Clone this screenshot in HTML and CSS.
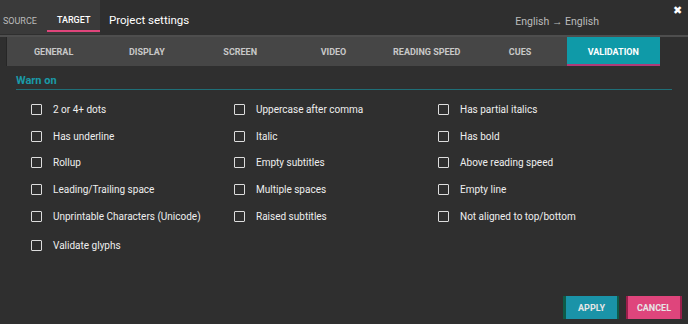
FILE: index.html
```html
<!DOCTYPE html>
<html lang="en">
<head>
    <meta charset="UTF-8">
    <meta name="viewport" content="width=device-width, initial-scale=1.0">
    <title>Project settings</title>
    <link rel="stylesheet" href="styles.css">
</head>
<body>
    <div class="header">
        <div class="side-tabs">
            <span class="side-tab">SOURCE</span>
            <span class="side-tab active">TARGET</span>
        </div>
        <h1>Project settings</h1>
        <span class="langs">English &rarr; English</span>
        <span class="close">&#x2716;</span>
    </div>

    <div class="tabs">
        <div class="tab">GENERAL</div>
        <div class="tab">DISPLAY</div>
        <div class="tab">SCREEN</div>
        <div class="tab">VIDEO</div>
        <div class="tab">READING SPEED</div>
        <div class="tab">CUES</div>
        <div class="tab active">VALIDATION</div>
    </div>

    <div class="section">
        <h2>Warn on</h2>
        <div class="options">
            <label class="option"><span class="box"></span>2 or 4+ dots</label>
            <label class="option"><span class="box"></span>Uppercase after comma</label>
            <label class="option"><span class="box"></span>Has partial italics</label>
            <label class="option"><span class="box"></span>Has underline</label>
            <label class="option"><span class="box"></span>Italic</label>
            <label class="option"><span class="box"></span>Has bold</label>
            <label class="option"><span class="box"></span>Rollup</label>
            <label class="option"><span class="box"></span>Empty subtitles</label>
            <label class="option"><span class="box"></span>Above reading speed</label>
            <label class="option"><span class="box"></span>Leading/Trailing space</label>
            <label class="option"><span class="box"></span>Multiple spaces</label>
            <label class="option"><span class="box"></span>Empty line</label>
            <label class="option"><span class="box"></span>Unprintable Characters (Unicode)</label>
            <label class="option"><span class="box"></span>Raised subtitles</label>
            <label class="option"><span class="box"></span>Not aligned to top/bottom</label>
            <label class="option last"><span class="box"></span>Validate glyphs</label>
        </div>
    </div>

    <div class="actions">
        <button class="btn btn-apply">APPLY</button>
        <button class="btn btn-cancel">CANCEL</button>
    </div>
</body>
</html>
```

FILE: styles.css
```css
body {
    margin: 0;
    width: 688px;
    height: 324px;
    overflow: hidden;
    background-color: #2f2f2f;
    font-family: Roboto, 'Liberation Sans', sans-serif;
    color: #eee;
}
.header {
    display: flex;
    align-items: center;
    height: 37px;
    box-sizing: border-box;
    padding-top: 5px;
    border-bottom: 2px solid #4e4e4e;
}
.side-tabs {
    display: flex;
    align-self: flex-start;
    margin-top: -5px;
    height: 34px;
    width: 100px;
    background-color: #3a3a3a;
}
.side-tab {
    display: flex;
    align-items: center;
    height: 32px;
    box-sizing: border-box;
    padding: 9px 0 0 3px;
    font-size: 9px;
    color: #bbb;
}
.side-tab.active {
    margin-left: 10px;
    width: 53px;
    padding-left: 10px;
    color: #fff;
    font-weight: 500;
    border-bottom: 2px solid #e0457b;
}
h1 {
    margin: 0 0 0 9px;
    font-size: 11.5px;
    font-weight: 400;
    color: #fff;
}
.langs {
    margin-left: auto;
    margin-right: 89px;
    margin-top: 2px;
    font-size: 10.5px;
    color: #bbb;
}
.close {
    position: absolute;
    top: 4px;
    right: 6px;
    font-size: 11px;
    color: #fff;
}
.tabs {
    display: flex;
    height: 29px;
    margin: 0 28px 0 7px;
    background-color: #464646;
    box-shadow: -1px 0 0 #262626;
}
.tab {
    flex: 1;
    display: flex;
    align-items: center;
    justify-content: center;
    font-size: 9px;
    font-weight: 700;
    color: #c8c8c8;
}
.tab.active {
    background-color: #0f9aa8;
    color: #fff;
    border-bottom: 2px solid #b03a78;
    box-sizing: border-box;
    padding-top: 2px;
}
.section {
    margin: 8px 16px 0 16px;
}
h2 {
    margin: 0;
    padding-bottom: 2px;
    font-size: 11px;
    font-weight: 700;
    color: #1a9aa7;
    border-bottom: 1px solid #1f6f78;
}
.options {
    display: grid;
    grid-template-columns: 203px 204px 1fr;
    padding: 6px 0 0 15px;
}
.option {
    display: flex;
    align-items: center;
    height: 26.7px;
    font-size: 10px;
    color: #eee;
}
.option.last {
    height: 29px;
    padding-top: 2px;
}
.box {
    width: 9px;
    height: 9px;
    border: 1.5px solid #ddd;
    border-radius: 1px;
    margin-right: 11px;
}
.actions {
    display: flex;
    justify-content: flex-end;
    gap: 7px;
    margin: 36px 6px 0 0;
}
.btn {
    width: 56px;
    height: 23px;
    padding: 0;
    font-family: Roboto, 'Liberation Sans', sans-serif;
    font-size: 9px;
    font-weight: 700;
    color: #e6e6e6;
    border: none;
    border-radius: 0;
}
.btn-apply {
    background-color: #1a93a8;
    border-left: 3px solid #0e5b48;
    border-right: 2px solid #0e5b48;
}
.btn-cancel {
    background-color: #df457c;
    border-left: 2px solid #9a1f4b;
    border-right: 2px solid #9a1f4b;
}
```
